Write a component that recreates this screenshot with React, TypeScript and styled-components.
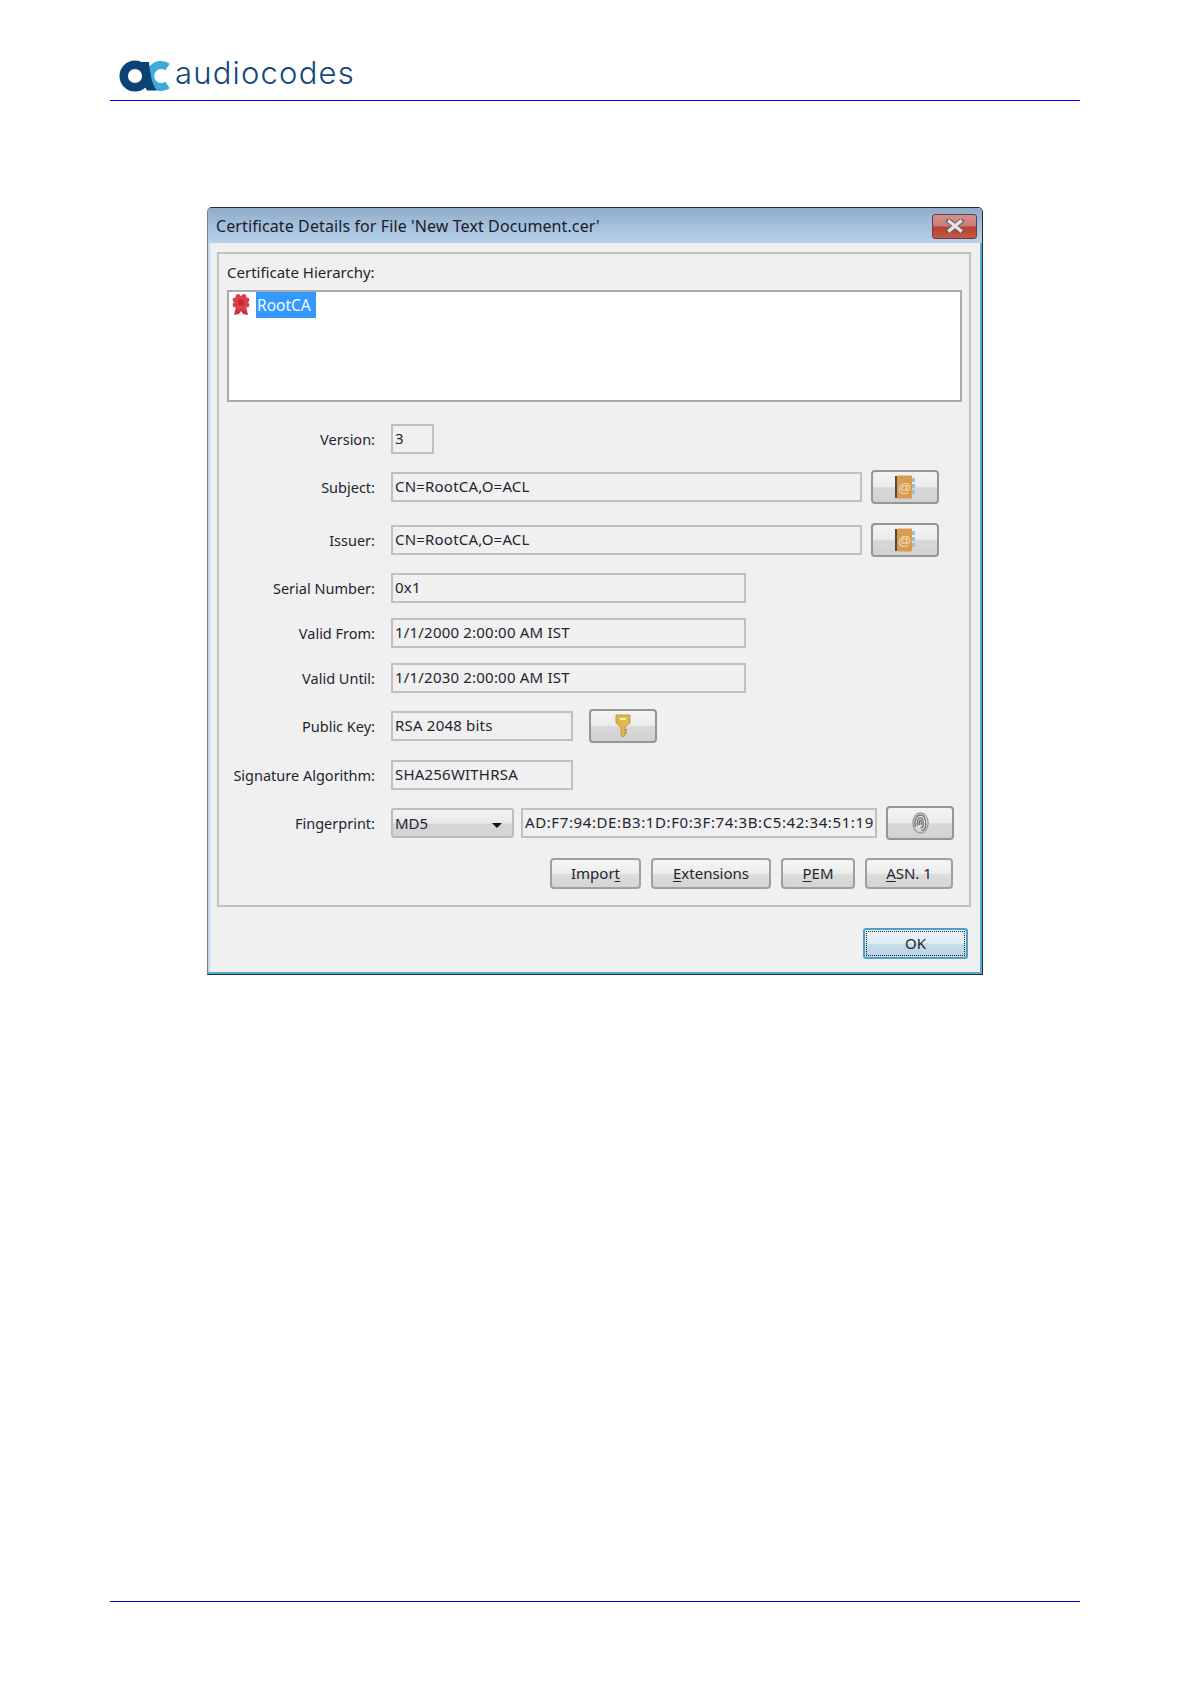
import React from 'react'
import styled, { createGlobalStyle } from 'styled-components'

const GlobalStyle = createGlobalStyle`
  html, body {
    margin: 0;
    padding: 0;
    background: #fff;
  }
`

const Page = styled.div`
  width: 1192px;
  height: 1685px;
  padding: 0 112px 0 110px;
  box-sizing: border-box;
  display: flex;
  flex-direction: column;
  font-family: "Noto Sans", "Open Sans", sans-serif;
`

const Header = styled.header`
  height: 101px;
  flex: none;
  box-sizing: border-box;
  border-bottom: 1px solid #0000ff;
  display: flex;
  align-items: flex-start;
  padding: 60px 0 0 8px;
  gap: 2px;
`

const LogoText = styled.span`
  margin-top: -2px;
  font-family: Inter, Lato, sans-serif;
  font-size: 31px;
  line-height: 30px;
  font-weight: 300;
  letter-spacing: 1.2px;
  color: #14477a;
`

const Main = styled.main`
  flex: 1;
  padding: 106px 0 0 97px;
`

const Footer = styled.footer`
  height: 83px;
  flex: none;
  border-top: 1px solid #0000c0;
`

const Dialog = styled.section`
  width: 776px;
  height: 768px;
  box-sizing: border-box;
  background: #f0f0f0;
  border: 1px solid #2b2b2b;
  border-left-color: #6f7d8c;
  border-radius: 5px 5px 0 0;
  box-shadow: inset -2px -2px 0 #4fb0d0, inset 2px 0 0 #c4d8ea;
  display: flex;
  flex-direction: column;
`

const TitleBar = styled.div`
  height: 35px;
  flex: none;
  border-radius: 4px 4px 0 0;
  background: linear-gradient(#8fadcb, #b7d1ea);
  display: flex;
  align-items: center;
  justify-content: space-between;
  padding: 0 5px 0 8px;
`

const Title = styled.h1`
  margin: 0;
  font-size: 16px;
  font-weight: 400;
  letter-spacing: 0.1px;
  color: #1d1a2c;
`

const CloseButton = styled.button`
  width: 45px;
  height: 25px;
  margin-top: 1px;
  padding: 0;
  border: 1px solid #6d3a48;
  border-radius: 3px;
  background: linear-gradient(#d29088 0%, #cb7f74 45%, #b5402c 55%, #c45a44 100%);
  display: flex;
  align-items: center;
  justify-content: center;
`

const Panel = styled.div`
  margin: 9px 0 0 9px;
  width: 754px;
  height: 655px;
  box-sizing: border-box;
  border: 2px solid #c0c0c0;
  padding: 8px 8px 0;
`

const HierarchyLabel = styled.div`
  font-size: 15px;
  line-height: 20px;
  height: 20px;
  color: #1f2530;
`

const ListBox = styled.div`
  margin-top: 8px;
  width: 735px;
  height: 112px;
  box-sizing: border-box;
  background: #fff;
  border: 2px solid #a8acb2;
  padding: 0 2px;
  display: flex;
  align-items: flex-start;
  gap: 5px;
`

const TreeIcon = styled.svg`
  width: 20px;
  height: 24px;
  margin-top: 1px;
`

const TreeItem = styled.span`
  background: #3399ff;
  color: #f4f9ff;
  font-size: 15.5px;
  line-height: 26px;
  height: 26px;
  width: 60px;
  padding-left: 1px;
  box-sizing: border-box;
`

const Form = styled.div`
  display: flex;
  flex-direction: column;
`

const Row = styled.div<{ $top: number }>`
  display: flex;
  align-items: center;
  margin-top: ${(p) => p.$top}px;
`

const RowLabel = styled.span`
  width: 148px;
  margin-right: 16px;
  text-align: right;
  flex: none;
  font-size: 14.5px;
  line-height: 20px;
  color: #1f2530;
`

const Field = styled.div<{ $width: number }>`
  width: ${(p) => p.$width}px;
  height: 30px;
  box-sizing: border-box;
  border: 2px solid #c0c0c0;
  padding: 0 2px;
  font-size: 15px;
  letter-spacing: 0.2px;
  line-height: 25px;
  color: #1f2530;
  white-space: nowrap;
  overflow: hidden;
  flex: none;
`

const HashField = styled(Field)`
  margin-left: 7px;
  letter-spacing: 0.6px;
`

const IconButton = styled.button<{ $left: number }>`
  width: 68px;
  height: 34px;
  margin-left: ${(p) => p.$left}px;
  padding: 0;
  flex: none;
  border: 2px solid #969696;
  border-radius: 4px;
  background: linear-gradient(#f3f3f3 0%, #ececec 48%, #d8d8d8 52%, #d2d2d2 100%);
  display: flex;
  align-items: center;
  justify-content: center;
`

const Combo = styled.div`
  width: 123px;
  height: 30px;
  box-sizing: border-box;
  flex: none;
  border: 2px solid #bcbcbc;
  border-radius: 3px;
  background: linear-gradient(#f2f2f2 0%, #e9e9e9 50%, #d6d6d6 55%, #d4d4d4 100%);
  padding: 0 10px 0 2px;
  display: flex;
  align-items: center;
  justify-content: space-between;
  font-size: 15px;
  color: #1f2530;
`

const Caret = styled.span`
  width: 0;
  height: 0;
  border-left: 5px solid transparent;
  border-right: 5px solid transparent;
  border-top: 5px solid #111;
  margin-top: 4px;
`

const ActionBar = styled.div`
  margin: 18px 0 0 323px;
  display: flex;
  gap: 10px;
`

const ActionButton = styled.button<{ $width: number }>`
  width: ${(p) => p.$width}px;
  height: 31px;
  padding: 0 0 2px;
  border: 2px solid #a0a0a0;
  border-radius: 4px;
  background: linear-gradient(#f5f5f5 0%, #ededed 48%, #dcdcdc 55%, #d4d4d4 100%);
  font-family: inherit;
  font-size: 15px;
  color: #1f2530;
  u {
    text-underline-offset: 2px;
  }
`

const DialogFooter = styled.div`
  display: flex;
  justify-content: flex-end;
  padding: 21px 14px 0 0;
`

const OkButton = styled.button`
  width: 105px;
  height: 31px;
  padding: 0 0 2px;
  border: 2px solid #4f9fc8;
  border-radius: 3px;
  outline: 1px dotted #222;
  outline-offset: -4px;
  background: linear-gradient(#eaf3f8 0%, #dfecf4 48%, #c3dbe9 55%, #bcd5e5 100%);
  font-family: inherit;
  font-size: 15px;
  color: #1f2530;
`

function LogoMark() {
  return (
    <svg width="55" height="32" viewBox="0 0 55 32">
      <path d="M49.5 7 A11 11 0 1 0 49.5 25" fill="none" stroke="#3fa9dc" strokeWidth="8" />
      <circle cx="17" cy="16" r="11.3" fill="none" stroke="#0c4377" strokeWidth="8.4" />
      <path d="M23 2 L31 2 C 32 11 33 24 39 30.5 L 29 30.5 C 26 26 25 22 25 16 Z" fill="#0c4377" />
    </svg>
  )
}

function CloseGlyph() {
  return (
    <svg width="18" height="14" viewBox="0 0 18 14">
      <path d="M3 2 L15 12 M15 2 L3 12" stroke="#5b5560" strokeWidth="5" strokeLinecap="square" />
      <path d="M3.5 2.5 L14.5 11.5 M14.5 2.5 L3.5 11.5" stroke="#e4e1e1" strokeWidth="3.4" strokeLinecap="square" />
    </svg>
  )
}

function RosetteIcon() {
  return (
    <TreeIcon viewBox="0 0 20 24">
      <path d="M5 14 L3 22 L8 21 L10 18 L12 21 L17 22 L15 14 Z" fill="#c9343c" />
      <circle cx="10" cy="9.5" r="7" fill="#e0444e" />
      <circle cx="4" cy="7" r="2.4" fill="#dc3f49" />
      <circle cx="16" cy="7" r="2.4" fill="#dc3f49" />
      <circle cx="4" cy="12" r="2.4" fill="#dc3f49" />
      <circle cx="16" cy="12" r="2.4" fill="#dc3f49" />
      <circle cx="7" cy="3.5" r="2.4" fill="#dc3f49" />
      <circle cx="13" cy="3.5" r="2.4" fill="#dc3f49" />
      <circle cx="7" cy="15.5" r="2.4" fill="#dc3f49" />
      <circle cx="13" cy="15.5" r="2.4" fill="#dc3f49" />
      <circle cx="10" cy="9.5" r="3.4" fill="#c22f38" />
    </TreeIcon>
  )
}

function BookIcon() {
  return (
    <svg width="21" height="24" viewBox="0 0 21 24">
      <rect x="0" y="1" width="2" height="22" fill="#4c4a44" />
      <rect x="2" y="0.5" width="15" height="23" rx="1" fill="#d69c52" />
      <rect x="17" y="3" width="3" height="4" fill="#9fc0cc" />
      <rect x="17" y="9" width="3" height="4" fill="#9fc0cc" />
      <rect x="17" y="15" width="3" height="4" fill="#9fc0cc" />
      <text x="9.5" y="16.5" textAnchor="middle" fontSize="13" fontFamily="Liberation Sans, sans-serif" fill="#f6dfba">@</text>
    </svg>
  )
}

function KeyIcon() {
  return (
    <svg width="16" height="24" viewBox="0 0 16 24">
      <path d="M1 1 H15 V9 L10 13 V21 L8 23 L6 21 V13 L1 9 Z" fill="#e2b84c" stroke="#b58f2e" strokeWidth="0.8" />
      <rect x="5" y="4" width="6" height="2" fill="#f8eecb" />
      <path d="M10 16 H12 M10 19 H12" stroke="#a98528" strokeWidth="1.4" />
    </svg>
  )
}

function FingerprintIcon() {
  return (
    <svg width="17" height="22" viewBox="0 0 17 22" fill="none" stroke="#6e6e6e" strokeWidth="1.3">
      <ellipse cx="8.5" cy="11" rx="7.6" ry="10" stroke="#9a9a9a" />
      <path d="M3.2 15 C 2 7 5 3.2 8.5 3.2 C 12 3.2 14.4 7 13.6 14 C 13.2 16.5 11.5 18.4 9.5 18.6" />
      <path d="M5.4 13.5 C 5 8 6.6 5.6 8.5 5.6 C 10.6 5.6 11.8 8.5 11.2 13 C 10.9 15 9.8 16 8.6 16" />
      <path d="M7.4 13 C 7 10 7.6 8 8.5 8 C 9.4 8 9.6 10.5 9.2 12.6" />
    </svg>
  )
}

export default function App() {
  return (
    <Page>
      <GlobalStyle />
      <Header>
        <LogoMark />
        <LogoText>audiocodes</LogoText>
      </Header>
      <Main>
        <Dialog>
          <TitleBar>
            <Title>Certificate Details for File 'New Text Document.cer'</Title>
            <CloseButton aria-label="Close">
              <CloseGlyph />
            </CloseButton>
          </TitleBar>
          <Panel>
            <HierarchyLabel>Certificate Hierarchy:</HierarchyLabel>
            <ListBox>
              <RosetteIcon />
              <TreeItem>RootCA</TreeItem>
            </ListBox>
            <Form>
              <Row $top={22}>
                <RowLabel>Version:</RowLabel>
                <Field $width={43}>3</Field>
              </Row>
              <Row $top={16}>
                <RowLabel>Subject:</RowLabel>
                <Field $width={471}>CN=RootCA,O=ACL</Field>
                <IconButton $left={9}><BookIcon /></IconButton>
              </Row>
              <Row $top={19}>
                <RowLabel>Issuer:</RowLabel>
                <Field $width={471}>CN=RootCA,O=ACL</Field>
                <IconButton $left={9}><BookIcon /></IconButton>
              </Row>
              <Row $top={16}>
                <RowLabel>Serial Number:</RowLabel>
                <Field $width={355}>0x1</Field>
              </Row>
              <Row $top={15}>
                <RowLabel>Valid From:</RowLabel>
                <Field $width={355}>1/1/2000 2:00:00 AM IST</Field>
              </Row>
              <Row $top={15}>
                <RowLabel>Valid Until:</RowLabel>
                <Field $width={355}>1/1/2030 2:00:00 AM IST</Field>
              </Row>
              <Row $top={16}>
                <RowLabel>Public Key:</RowLabel>
                <Field $width={182}>RSA 2048 bits</Field>
                <IconButton $left={16}><KeyIcon /></IconButton>
              </Row>
              <Row $top={17}>
                <RowLabel>Signature Algorithm:</RowLabel>
                <Field $width={182}>SHA256WITHRSA</Field>
              </Row>
              <Row $top={16}>
                <RowLabel>Fingerprint:</RowLabel>
                <Combo>MD5<Caret /></Combo>
                <HashField $width={356}>AD:F7:94:DE:B3:1D:F0:3F:74:3B:C5:42:34:51:19</HashField>
                <IconButton $left={9}><FingerprintIcon /></IconButton>
              </Row>
            </Form>
            <ActionBar>
              <ActionButton $width={91}>Impor<u>t</u></ActionButton>
              <ActionButton $width={120}><u>E</u>xtensions</ActionButton>
              <ActionButton $width={74}><u>P</u>EM</ActionButton>
              <ActionButton $width={88}><u>A</u>SN. 1</ActionButton>
            </ActionBar>
          </Panel>
          <DialogFooter>
            <OkButton>OK</OkButton>
          </DialogFooter>
        </Dialog>
      </Main>
      <Footer />
    </Page>
  )
}
